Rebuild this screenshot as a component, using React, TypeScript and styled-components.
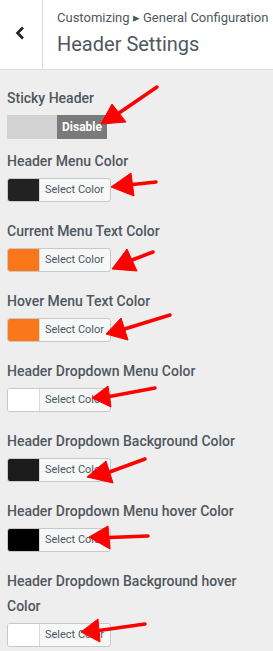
import React from "react";
import styled, { createGlobalStyle } from "styled-components";

const GlobalStyle = createGlobalStyle`
  html, body { margin: 0; padding: 0; background: #eeeeee; }
  body { font-family: Roboto, "Noto Sans", "Liberation Sans", sans-serif; }
`;

const Page = styled.div`
  position: relative;
  width: 273px;
  min-height: 651px;
  background: #eeeeee;
  overflow: hidden;
`;

const Header = styled.header`
  display: flex;
  height: 69px;
  background: #ffffff;
  border-bottom: 1px solid #dcdcde;
`;

const BackButton = styled.button`
  width: 43px;
  flex: none;
  border: 0;
  border-right: 1px solid #dcdcde;
  background: #ffffff;
  padding: 0 3px 4px 0;
  display: flex;
  align-items: center;
  justify-content: center;
  cursor: pointer;
`;

const TitleBlock = styled.div`
  display: flex;
  flex-direction: column;
  padding: 9px 0 0 14px;
  color: #50575e;
  white-space: nowrap;
`;

const Breadcrumb = styled.span`
  font-size: 13px;
  line-height: 18px;
`;

const Title = styled.h1`
  margin: 0;
  font-size: 20px;
  font-weight: 400;
  line-height: 34px;
`;

const Controls = styled.div`
  display: flex;
  flex-direction: column;
  padding: 16px 7px 0 7px;
`;

const Control = styled.div<{ $gap: number }>`
  display: flex;
  flex-direction: column;
  align-items: flex-start;
  margin-bottom: ${(p) => p.$gap}px;
`;

const Label = styled.span`
  font-size: 14px;
  font-weight: 500;
  line-height: 25px;
  color: #50575e;
  margin-bottom: 3.5px;
  width: 250px;
`;

const Toggle = styled.div`
  display: flex;
  width: 100px;
  height: 24px;
`;

const ToggleHalf = styled.span<{ $active?: boolean }>`
  flex: 1;
  display: flex;
  align-items: center;
  justify-content: center;
  background: ${(p) => (p.$active ? "#7a7a7a" : "#d2d2d2")};
  color: #ffffff;
  font-size: 12px;
  font-weight: 700;
`;

const ColorButton = styled.button`
  display: flex;
  align-items: stretch;
  width: 104px;
  height: 24px;
  padding: 0;
  border: 1px solid #c8c8c8;
  border-radius: 3px;
  background: #f6f7f7;
  overflow: hidden;
  cursor: pointer;
`;

const Swatch = styled.span<{ $color: string }>`
  width: 31px;
  flex: none;
  background: ${(p) => p.$color};
  border-right: 1px solid #dadada;
`;

const ButtonText = styled.span`
  flex: 1;
  display: flex;
  align-items: center;
  justify-content: center;
  padding-right: 1px;
  font-family: Roboto, "Liberation Sans", sans-serif;
  font-size: 11px;
  color: #50575e;
`;

const Overlay = styled.svg`
  position: absolute;
  left: 0;
  top: 0;
  pointer-events: none;
`;

type Arrow = { tail: [number, number]; tip: [number, number]; a: [number, number]; b: [number, number] };

const arrows: Arrow[] = [
  { tail: [157, 87], tip: [101, 124], a: [112, 104], b: [126, 122] },
  { tail: [156, 182], tip: [111, 187], a: [131, 173], b: [134, 196] },
  { tail: [153, 252], tip: [112, 269], a: [127, 249], b: [137, 271] },
  { tail: [170, 315], tip: [106, 334], a: [121, 318], b: [128, 340] },
  { tail: [155, 388], tip: [92, 398], a: [108, 386], b: [111, 407] },
  { tail: [145, 459], tip: [87, 477], a: [106, 461], b: [113, 483] },
  { tail: [148, 536], tip: [89, 537], a: [108, 526], b: [110, 549] },
  { tail: [145, 624], tip: [81, 632], a: [98, 619], b: [100, 642] },
];

const colorControls = [
  { label: "Header Menu Color", color: "#222222" },
  { label: "Current Menu Text Color", color: "#fa7819" },
  { label: "Hover Menu Text Color", color: "#fa7819" },
  { label: "Header Dropdown Menu Color", color: "#ffffff" },
  { label: "Header Dropdown Background Color", color: "#1b1b1b" },
  { label: "Header Dropdown Menu hover Color", color: "#000000" },
  { label: "Header Dropdown Background hover Color", color: "#ffffff" },
];

export default function App() {
  return (
    <Page>
      <GlobalStyle />
      <Header>
        <BackButton aria-label="Back">
          <svg width="12" height="14" viewBox="0 0 12 14">
            <polyline points="9,1.5 3.5,7 9,12.5" fill="none" stroke="#1d2327" strokeWidth="2.6" />
          </svg>
        </BackButton>
        <TitleBlock>
          <Breadcrumb>Customizing ▸ General Configuration</Breadcrumb>
          <Title>Header Settings</Title>
        </TitleBlock>
      </Header>
      <Controls>
        <Control $gap={10.5}>
          <Label>Sticky Header</Label>
          <Toggle>
            <ToggleHalf />
            <ToggleHalf $active>Disable</ToggleHalf>
          </Toggle>
        </Control>
        {colorControls.map((c) => (
          <Control key={c.label} $gap={17.5}>
            <Label>{c.label}</Label>
            <ColorButton>
              <Swatch $color={c.color} />
              <ButtonText>Select Color</ButtonText>
            </ColorButton>
          </Control>
        ))}
      </Controls>
      <Overlay width="273" height="651" viewBox="0 0 273 651">
        {arrows.map((ar, i) => {
          const mx = (ar.a[0] + ar.b[0]) / 2;
          const my = (ar.a[1] + ar.b[1]) / 2;
          return (
            <g key={i} fill="#ff0000" stroke="#ff0000">
              <line x1={ar.tail[0]} y1={ar.tail[1]} x2={mx} y2={my} strokeWidth="3.5" strokeLinecap="round" />
              <polygon points={`${ar.tip[0]},${ar.tip[1]} ${ar.a[0]},${ar.a[1]} ${ar.b[0]},${ar.b[1]}`} strokeWidth="1" strokeLinejoin="round" />
            </g>
          );
        })}
      </Overlay>
    </Page>
  );
}
